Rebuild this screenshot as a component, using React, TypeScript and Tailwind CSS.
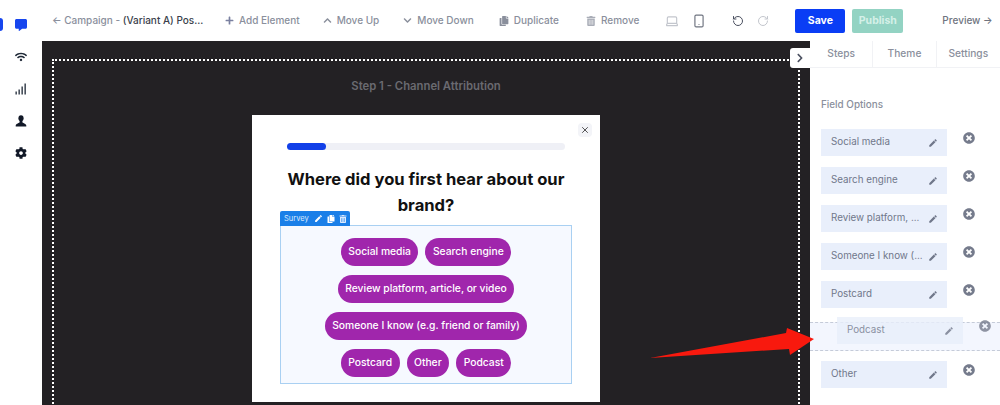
import { FaChevronDown, FaChevronUp, FaCog, FaCommentAlt, FaCopy, FaPlus, FaTimesCircle, FaTrashAlt, FaWifi, FaChevronRight } from 'react-icons/fa';
import { MdEdit } from 'react-icons/md';
import { LuLaptop, LuRotateCcw, LuRotateCw, LuSmartphone, LuX } from 'react-icons/lu';

const fields = ['Social media', 'Search engine', 'Review platform, ...', 'Someone I know (...', 'Postcard'];

function SignalIcon() {
  return (
    <svg width="12" height="12" viewBox="0 0 12 12" fill="#1f2937">
      <rect x="0.5" y="8.5" width="1.3" height="3" />
      <rect x="3.5" y="6.5" width="1.3" height="5" />
      <rect x="6.5" y="3.5" width="1.3" height="8" />
      <rect x="9.5" y="0.5" width="1.3" height="11" />
    </svg>
  );
}

function PersonIcon() {
  return (
    <svg width="12" height="12" viewBox="0 0 12 12" fill="#111827">
      <ellipse cx="6" cy="3.2" rx="2.6" ry="3" />
      <path d="M4.6 5.6h2.8v1.7c0 .8 3.6 1.2 3.9 3.1v1.1H.7v-1.1c.3-1.9 3.9-2.3 3.9-3.1z" />
    </svg>
  );
}

function ToolItem({ icon, label, className }: { icon: React.ReactNode; label: string; className: string }) {
  return (
    <div className={`flex items-center gap-[5px] whitespace-nowrap text-[10px] font-medium text-[#8a8f9c] ${className}`}>
      {icon}
      <span>{label}</span>
    </div>
  );
}

function FieldChip({ label }: { label: string }) {
  return (
    <div className="flex h-[27px] w-[126px] items-center justify-between bg-[#e9effb] pl-[10px] pr-[9px] text-[9.8px] text-[#70778a]">
      <span className="whitespace-nowrap">{label}</span>
      <MdEdit size={10} className="shrink-0 text-[#70778a]" />
    </div>
  );
}

function FieldRow({ label }: { label: string }) {
  return (
    <div className="flex items-start">
      <FieldChip label={label} />
      <FaTimesCircle size={12} className="ml-[16px] mt-[3px] text-[#757b8c]" />
    </div>
  );
}

function Pill({ label }: { label: string }) {
  return <div className="flex h-7 items-center whitespace-nowrap rounded-full bg-[#a026ac] px-[7.5px] text-[10.3px] font-medium text-white">{label}</div>;
}

export default function App() {
  return (
    <div className="relative flex h-[405px] w-[1000px] overflow-hidden bg-white font-['Inter',sans-serif]">
      <aside className="relative flex w-[42px] shrink-0 flex-col items-center gap-[20px] pt-[19px]">
        <div className="absolute left-0 top-[18px] h-[13px] w-[3px] rounded-r-sm bg-[#1746ee]" />
        <FaCommentAlt size={12} className="text-[#1746ee]" />
        <FaWifi size={12} className="text-[#1f2937]" />
        <SignalIcon />
        <PersonIcon />
        <FaCog size={12} className="text-[#111827]" />
      </aside>

      <div className="flex min-w-0 flex-1 flex-col">
        <header className="flex h-[41px] shrink-0 items-center">
          <div className="ml-[10px] w-[150px] whitespace-nowrap text-[10px] font-medium text-[#8a8f9c]">
            ← Campaign - <span className="text-[#3a3f4c]">(Variant A) Pos...</span>
          </div>
          <ToolItem className="ml-[23px]" icon={<FaPlus size={9} className="text-[#7a80a0]" />} label="Add Element" />
          <ToolItem className="ml-[23px]" icon={<FaChevronUp size={9} />} label="Move Up" />
          <ToolItem className="ml-[24px]" icon={<FaChevronDown size={9} />} label="Move Down" />
          <ToolItem className="ml-[25px]" icon={<FaCopy size={10} />} label="Duplicate" />
          <ToolItem className="ml-[27px]" icon={<FaTrashAlt size={10} className="text-[#a9adb7]" />} label="Remove" />
          <LuLaptop size={14} className="ml-[26px] text-[#c3c6cd]" />
          <LuSmartphone size={14} className="ml-[13px] text-[#6f7480]" />
          <LuRotateCcw size={12} className="ml-[26px] text-[#4b5060]" />
          <LuRotateCw size={12} className="ml-[13px] text-[#c3c6cd]" />
          <button className="ml-[26px] h-6 w-[50px] rounded-[2px] bg-[#0a3df5] text-[10.5px] font-bold text-white">Save</button>
          <button className="ml-[7px] h-6 w-[51px] rounded-[2px] bg-[#93d3c3] text-[10.5px] font-bold text-[#d5f0e8]">Publish</button>
          <div className="ml-[39px] whitespace-nowrap text-[10px] font-medium text-[#6f7480]">Preview →</div>
        </header>

        <div className="flex min-h-0 flex-1">
          <main className="relative w-[768px] shrink-0 overflow-hidden bg-[#232124] px-[10px] pt-[18px]">
            <div className="h-[420px] border-2 border-dotted border-white pt-[17px]">
              <div className="text-center text-[11.3px] font-semibold leading-4 text-[#6a6a70]">Step 1 - Channel Attribution</div>
              <div className="relative mx-auto mt-[21px] h-[287px] w-[348px] bg-white pt-[28px]">
                <div className="absolute right-[8px] top-[8px] flex h-[14px] w-[14px] items-center justify-center rounded-sm bg-[#f3f4f8]">
                  <LuX size={10} className="text-[#333]" />
                </div>
                <div className="mx-[35px] h-[7px] rounded-full bg-[#eff0f6]">
                  <div className="h-[7px] w-[39px] rounded-full bg-[#1240e8]" />
                </div>
                <h1 className="mx-[28px] mt-4 text-center text-[16.6px] font-bold leading-[26px] text-[#111]">
                  Where did you first hear about our brand?
                </h1>
                <div className="relative mx-[28px] mt-[7px] h-[159px] border border-[#a9d0f2] bg-[#f6f9ff] px-[30px] pt-[12px]">
                  <div className="absolute -left-px -top-[15px] flex h-[15px] w-[70px] items-center gap-[4px] rounded-t-[2px] bg-[#1a7fe8] pl-[4px] text-[7.5px] text-[#dbeafe]">
                    <span className="mr-[1px]">Survey</span>
                    <MdEdit size={9} className="text-white" />
                    <FaCopy size={8} className="text-white" />
                    <FaTrashAlt size={8} className="text-[#dbeafe]" />
                  </div>
                  <div className="flex flex-wrap justify-center gap-x-[7px] gap-y-[9px]">
                    <Pill label="Social media" />
                    <Pill label="Search engine" />
                    <Pill label="Review platform, article, or video" />
                    <Pill label="Someone I know (e.g. friend or family)" />
                    <Pill label="Postcard" />
                    <Pill label="Other" />
                    <Pill label="Podcast" />
                  </div>
                </div>
              </div>
            </div>
            <div className="absolute right-0 top-[7px] flex h-5 w-[20px] items-center justify-center rounded-l-[3px] bg-white">
              <FaChevronRight size={10} className="text-[#4b5060]" />
            </div>
          </main>

          <aside className="w-[190px] shrink-0">
            <div className="grid h-[27px] grid-cols-3 border-b border-[#f1f2f5] text-center text-[10.2px] font-medium text-[#8a8f9c]">
              <div className="flex items-center justify-center border-r border-[#f1f2f5]">Steps</div>
              <div className="flex items-center justify-center border-r border-[#f1f2f5]">Theme</div>
              <div className="flex items-center justify-center">Settings</div>
            </div>
            <div className="mt-[28px] pl-[11px] text-[9.9px] font-medium leading-4 text-[#8a8f9c]">Field Options</div>
            <div className="mt-[17px] flex flex-col gap-[11px] pl-[11px]">
              {fields.map((f) => (
                <FieldRow key={f} label={f} />
              ))}
            </div>
            <div className="mt-[14px] h-[29px] border-y border-dashed border-[#c5cbd8] bg-[#f3f6fe]">
              <div className="relative -top-[6px] left-[27px] flex items-start opacity-80">
                <FieldChip label="Podcast" />
                <FaTimesCircle size={12} className="ml-[16px] mt-[3px] text-[#757b8c]" />
              </div>
            </div>
            <div className="mt-[10px] pl-[11px]">
              <FieldRow label="Other" />
            </div>
          </aside>
        </div>
      </div>

      <svg className="pointer-events-none absolute left-[640px] top-[320px]" width="180" height="45" viewBox="640 320 180 45">
        <polygon points="650,358 786,333 787,328 814,339 790,355 789,349" fill="#f8190e" />
      </svg>
    </div>
  );
}
